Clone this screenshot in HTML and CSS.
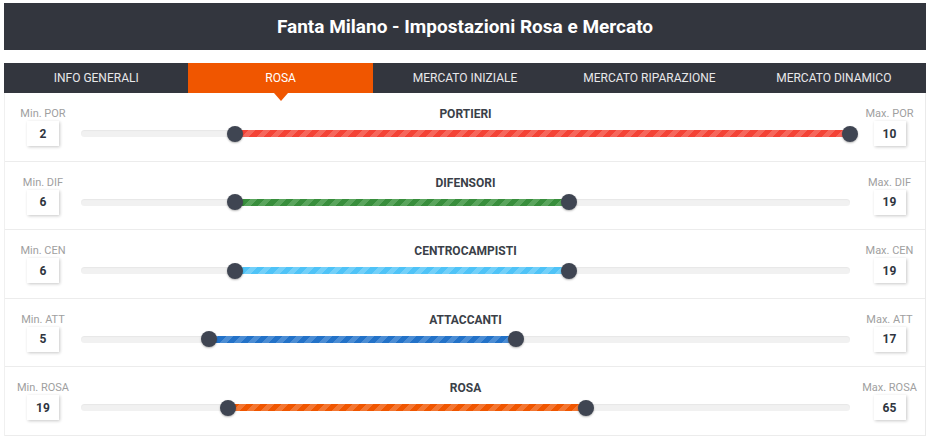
FILE: index.html
```html
<!DOCTYPE html>
<html lang="it">
<head>
<meta charset="utf-8">
<title>Fanta Milano - Impostazioni Rosa e Mercato</title>
<link rel="stylesheet" href="styles.css">
</head>
<body>
<div class="page">
  <header class="header">Fanta Milano - Impostazioni Rosa e Mercato</header>
  <nav class="tabs">
    <div class="tab">INFO GENERALI</div>
    <div class="tab active">ROSA</div>
    <div class="tab">MERCATO INIZIALE</div>
    <div class="tab">MERCATO RIPARAZIONE</div>
    <div class="tab">MERCATO DINAMICO</div>
  </nav>
  <section class="rows">
    <div class="row">
      <div class="side"><div class="lbl">Min. POR</div><div class="val">2</div></div>
      <div class="center">
        <div class="title">PORTIERI</div>
        <div class="track"><div class="fill red" style="left:20%;right:0%"></div><span class="knob" style="left:20%"></span><span class="knob" style="left:100%"></span></div>
      </div>
      <div class="side right"><div class="lbl">Max. POR</div><div class="val">10</div></div>
    </div>
    <div class="row">
      <div class="side"><div class="lbl">Min. DIF</div><div class="val">6</div></div>
      <div class="center">
        <div class="title">DIFENSORI</div>
        <div class="track"><div class="fill green" style="left:20%;right:36.6%"></div><span class="knob" style="left:20%"></span><span class="knob" style="left:63.4%"></span></div>
      </div>
      <div class="side right"><div class="lbl">Max. DIF</div><div class="val">19</div></div>
    </div>
    <div class="row">
      <div class="side"><div class="lbl">Min. CEN</div><div class="val">6</div></div>
      <div class="center">
        <div class="title">CENTROCAMPISTI</div>
        <div class="track"><div class="fill lightblue" style="left:20%;right:36.6%"></div><span class="knob" style="left:20%"></span><span class="knob" style="left:63.4%"></span></div>
      </div>
      <div class="side right"><div class="lbl">Max. CEN</div><div class="val">19</div></div>
    </div>
    <div class="row">
      <div class="side"><div class="lbl">Min. ATT</div><div class="val">5</div></div>
      <div class="center">
        <div class="title">ATTACCANTI</div>
        <div class="track"><div class="fill blue" style="left:16.6%;right:43.4%"></div><span class="knob" style="left:16.6%"></span><span class="knob" style="left:56.6%"></span></div>
      </div>
      <div class="side right"><div class="lbl">Max. ATT</div><div class="val">17</div></div>
    </div>
    <div class="row">
      <div class="side"><div class="lbl">Min. ROSA</div><div class="val">19</div></div>
      <div class="center">
        <div class="title">ROSA</div>
        <div class="track"><div class="fill orange" style="left:19.1%;right:34.3%"></div><span class="knob" style="left:19.1%"></span><span class="knob" style="left:65.7%"></span></div>
      </div>
      <div class="side right"><div class="lbl">Max. ROSA</div><div class="val">65</div></div>
    </div>
  </section>
</div>
</body>
</html>
```
FILE: styles.css
```css
* { box-sizing: border-box; }
html, body { margin: 0; padding: 0; background: #fff; }
body { font-family: Roboto, "Liberation Sans", Arial, sans-serif; color: #333; }
.page { padding: 3px 4px 0 4px; }
.header {
  height: 47px;
  background: #33363e;
  color: #fff;
  font-weight: 700;
  font-size: 19px;
  display: flex;
  align-items: center;
  justify-content: center;
}
.tabs {
  margin-top: 13px;
  height: 30px;
  background: #33363e;
  display: grid;
  grid-template-columns: repeat(5, 1fr);
}
.tab {
  color: #e8e8ea;
  font-size: 12px;
  display: flex;
  align-items: center;
  justify-content: center;
  position: relative;
}
.tab.active { background: #f05600; color: #fff; }
.tab.active::after {
  content: "";
  position: absolute;
  left: 50%;
  top: 100%;
  margin-left: -7px;
  border-left: 7px solid transparent;
  border-right: 7px solid transparent;
  border-top: 8px solid #f05600;
}
.rows {
  border-left: 1px solid #f0f0f0;
  border-right: 1px solid #eaeaea;
}
.row {
  display: grid;
  grid-template-columns: 76px 1fr 75px;
  height: 68.5px;
  border-bottom: 1px solid #ececec;
  padding-top: 15px;
}
.side { display: flex; flex-direction: column; align-items: center; }
.side.right { padding-left: 4px; }
.lbl { font-size: 11px; line-height: 12px; color: #a0a0a0; }
.val {
  width: 32px;
  height: 25px;
  margin-top: 1px;
  background: #fff;
  box-shadow: 1px 1px 3px rgba(0,0,0,0.22);
  display: flex;
  align-items: center;
  justify-content: center;
  font-weight: 700;
  font-size: 12px;
  color: #2f3540;
}
.center { position: relative; }
.title {
  text-align: center;
  font-weight: 700;
  font-size: 12px;
  line-height: 14px;
  color: #3a3f48;
  margin-top: -1px;
}
.track {
  position: relative;
  margin-top: 9px;
  height: 7px;
  border-radius: 4px;
  background: #f1f1f1;
  box-shadow: inset 0 1px 1px rgba(0,0,0,0.04);
}
.fill { position: absolute; top: 0; bottom: 0; }
.red { background: repeating-linear-gradient(-45deg, #f44336 0 5px, #f6675c 5px 10px); }
.green { background: repeating-linear-gradient(-45deg, #388e3c 0 5px, #5aa55d 5px 10px); }
.lightblue { background: repeating-linear-gradient(-45deg, #4fc3f7 0 5px, #73d0f9 5px 10px); }
.blue { background: repeating-linear-gradient(-45deg, #2372c8 0 5px, #4c8dd4 5px 10px); }
.orange { background: repeating-linear-gradient(-45deg, #f05600 0 5px, #f37733 5px 10px); }
.knob {
  position: absolute;
  top: 50%;
  width: 16px;
  height: 16px;
  margin: -8px 0 0 -8px;
  border-radius: 50%;
  background: #3f4552;
  box-shadow: 0 1px 2px rgba(0,0,0,0.3);
}
```
